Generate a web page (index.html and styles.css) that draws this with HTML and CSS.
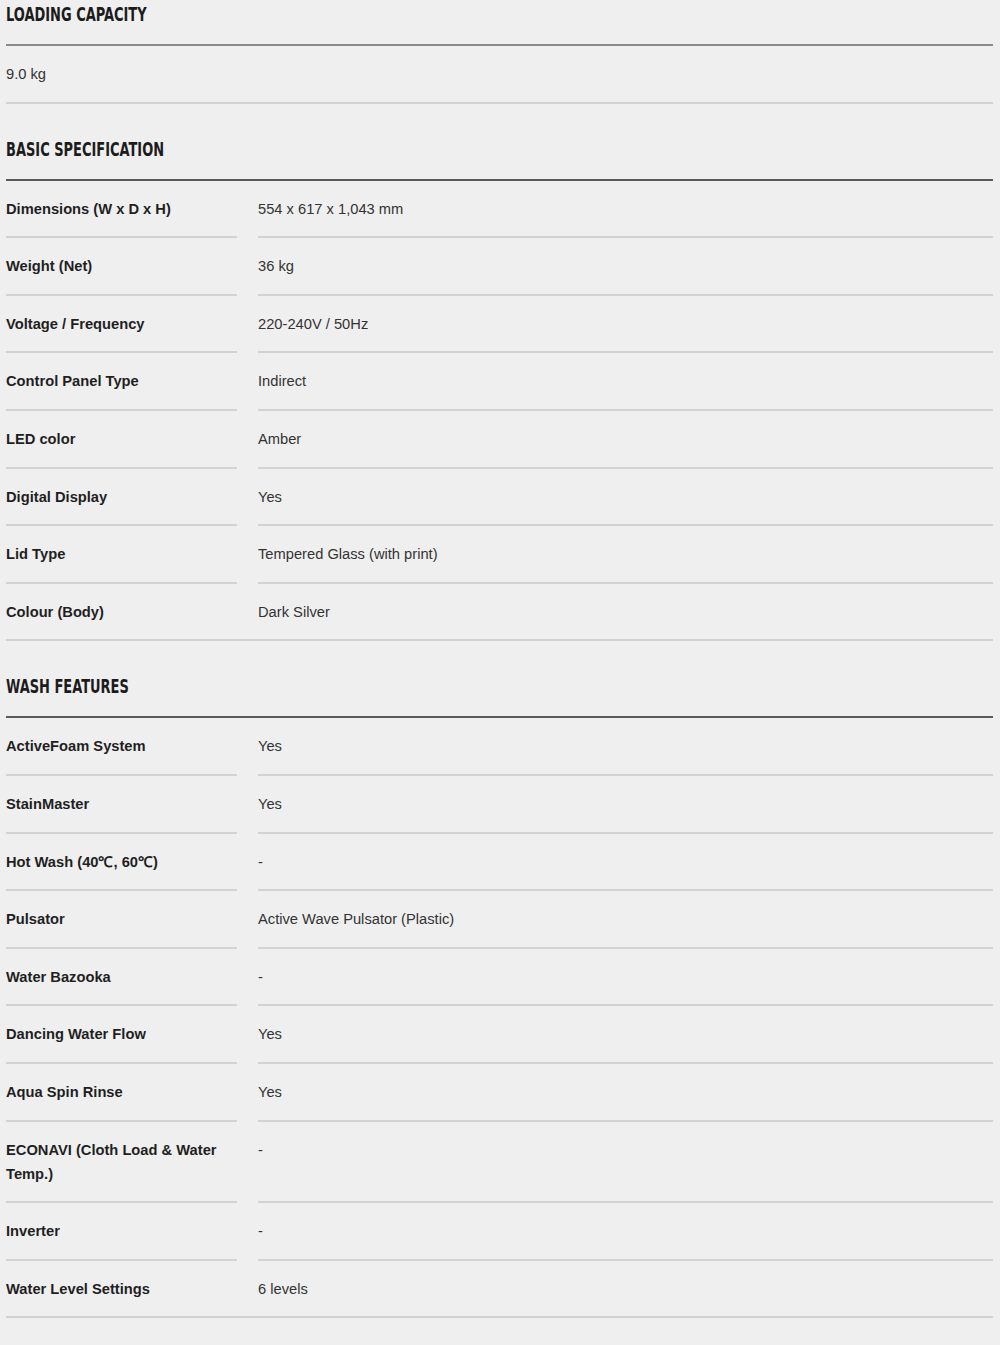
FILE: index.html
```html
<!DOCTYPE html>
<html lang="en">
<head>
<meta charset="utf-8">
<title>Specifications</title>
<link rel="stylesheet" href="styles.css">
</head>
<body>
<main class="specs">
  <section class="spec-section spec-section--first">
    <h2 class="spec-title"><span class="spec-title-text">LOADING CAPACITY</span></h2>
    <div class="spec-list">
      <div class="spec-row spec-row--single"><div class="spec-value">9.0 kg</div></div>
    </div>
  </section>

  <section class="spec-section">
    <h2 class="spec-title"><span class="spec-title-text">BASIC SPECIFICATION</span></h2>
    <div class="spec-list">
      <div class="spec-row"><div class="spec-label">Dimensions (W x D x H)</div><div class="spec-value">554 x 617 x 1,043 mm</div></div>
      <div class="spec-row"><div class="spec-label">Weight (Net)</div><div class="spec-value">36 kg</div></div>
      <div class="spec-row"><div class="spec-label">Voltage / Frequency</div><div class="spec-value">220-240V / 50Hz</div></div>
      <div class="spec-row"><div class="spec-label">Control Panel Type</div><div class="spec-value">Indirect</div></div>
      <div class="spec-row"><div class="spec-label">LED color</div><div class="spec-value">Amber</div></div>
      <div class="spec-row"><div class="spec-label">Digital Display</div><div class="spec-value">Yes</div></div>
      <div class="spec-row"><div class="spec-label">Lid Type</div><div class="spec-value">Tempered Glass (with print)</div></div>
      <div class="spec-row"><div class="spec-label">Colour (Body)</div><div class="spec-value">Dark Silver</div></div>
    </div>
  </section>

  <section class="spec-section">
    <h2 class="spec-title"><span class="spec-title-text">WASH FEATURES</span></h2>
    <div class="spec-list">
      <div class="spec-row"><div class="spec-label">ActiveFoam System</div><div class="spec-value">Yes</div></div>
      <div class="spec-row"><div class="spec-label">StainMaster</div><div class="spec-value">Yes</div></div>
      <div class="spec-row"><div class="spec-label">Hot Wash (40℃, 60℃)</div><div class="spec-value">-</div></div>
      <div class="spec-row"><div class="spec-label">Pulsator</div><div class="spec-value">Active Wave Pulsator (Plastic)</div></div>
      <div class="spec-row"><div class="spec-label">Water Bazooka</div><div class="spec-value">-</div></div>
      <div class="spec-row"><div class="spec-label">Dancing Water Flow</div><div class="spec-value">Yes</div></div>
      <div class="spec-row"><div class="spec-label">Aqua Spin Rinse</div><div class="spec-value">Yes</div></div>
      <div class="spec-row"><div class="spec-label">ECONAVI (Cloth Load &amp; Water Temp.)</div><div class="spec-value">-</div></div>
      <div class="spec-row"><div class="spec-label">Inverter</div><div class="spec-value">-</div></div>
      <div class="spec-row"><div class="spec-label">Water Level Settings</div><div class="spec-value">6 levels</div></div>
    </div>
  </section>
</main>
</body>
</html>
```

FILE: styles.css
```css
html, body {
  margin: 0;
  padding: 0;
  background: #efefef;
}

body {
  font-family: "Liberation Sans", Arial, sans-serif;
  font-size: 14.7px;
  color: #222;
}

.specs {
  width: 987px;
  margin-left: 6px;
  padding-bottom: 26px;
}

.spec-section + .spec-section {
  margin-top: 31px;
}

.spec-title {
  margin: 0;
  box-sizing: border-box;
  height: 46px;
  padding-top: 2px;
  font-family: "Liberation Sans Narrow", "DejaVu Sans Condensed", sans-serif;
  font-weight: bold;
  font-size: 19px;
  line-height: 24px;
  color: #1c1c1c;
  border-bottom: 2px solid #5a5a5a;
}

.spec-section--first .spec-title {
  border-bottom-color: #8a8a8a;
}

.spec-title-text {
  display: inline-block;
  transform-origin: left center;
  transform: scaleX(0.76);
  white-space: nowrap;
}

.spec-row {
  display: grid;
  grid-template-columns: 231px 1fr;
  column-gap: 21px;
}

.spec-row--single {
  grid-template-columns: 1fr;
}

.spec-label,
.spec-value {
  padding: 16px 0 15.6px;
  line-height: 24px;
  border-bottom: 2px solid #d2d2d2;
}

.spec-label {
  font-weight: bold;
  color: #1f1f1f;
}

.spec-value {
  color: #333;
}

.spec-row:last-child {
  border-bottom: 2px solid #d2d2d2;
}

.spec-row:last-child .spec-label,
.spec-row:last-child .spec-value {
  border-bottom: none;
}
```
